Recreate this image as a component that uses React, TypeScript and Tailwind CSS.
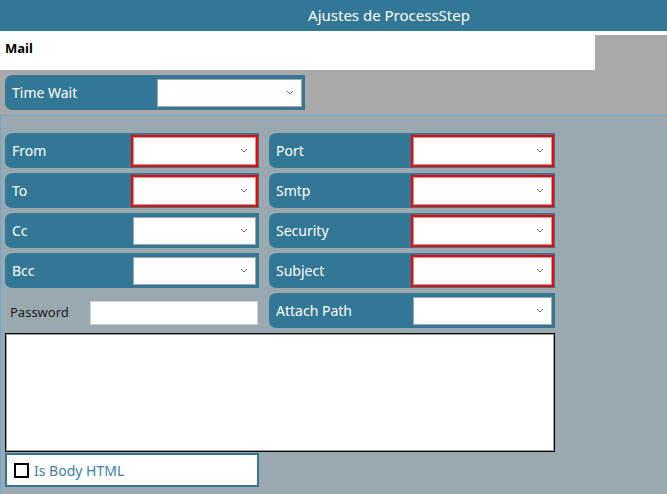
const font = { fontFamily: '"Segoe UI", "Noto Sans", "Liberation Sans", sans-serif' }

function Chevron() {
  return (
    <svg width="8" height="5" viewBox="0 0 8 5" className="shrink-0">
      <path d="M1 1 L4 4 L7 1" fill="none" stroke="#6b6b6b" strokeWidth="1" />
    </svg>
  )
}

function Dropdown({ width, required }: { width: string; required?: boolean }) {
  return (
    <div
      className={`${width} h-[28px] bg-white border border-[#a6a6a6] flex items-center justify-end pr-[7px] ${
        required ? "outline-2 outline-[#ff0000]" : ""
      }`}
    >
      <Chevron />
    </div>
  )
}

function Field({ label, required, right }: { label: string; required?: boolean; right?: boolean }) {
  return (
    <div className="h-[35px] bg-[#327896] rounded-l-[7px] flex items-center justify-between pl-[7px] pr-[3px]">
      <span className="text-white text-[14px]">{label}</span>
      <Dropdown width={right ? "w-[139px]" : "w-[123px]"} required={required} />
    </div>
  )
}

export default function App() {
  return (
    <div className="w-[667px] h-[494px] bg-[#9aa9b0] overflow-hidden flex flex-col" style={font}>
      <div className="h-[31px] bg-[#327896] flex items-center justify-center pl-[111px] text-white text-[15px]">
        Ajustes de ProcessStep
      </div>
      <div className="h-[39px] bg-white flex">
        <div className="flex-1 pl-[5px] pt-[8px] text-[13px] font-bold text-black">Mail</div>
        <div className="w-[72px] mt-[4px] bg-[#a9a9a9]" />
      </div>
      <div className="h-[45px] bg-[#a9a9a9] pl-[5px] pt-[5px]">
        <div className="w-[300px] h-[35px] bg-[#327896] rounded-l-[7px] flex items-center justify-between pl-[7px] pr-[3px]">
          <span className="text-white text-[14px]">Time Wait</span>
          <Dropdown width="w-[145px]" />
        </div>
      </div>
      <div className="flex-1 border-t border-l border-[#6aa7d3] pt-[17px] pl-[4px]">
        <div className="w-[550px] flex flex-col gap-[5px]">
          <div className="grid grid-cols-[254px_286px] gap-x-[10px] gap-y-[5px]">
            <Field label="From" required />
            <Field label="Port" required right />
            <Field label="To" required />
            <Field label="Smtp" required right />
            <Field label="Cc" />
            <Field label="Security" required right />
            <Field label="Bcc" />
            <Field label="Subject" required right />
            <div className="h-[35px] flex items-center justify-between pl-[5px] pr-px pt-[5px]">
              <span className="text-[13px] text-[#1a1a1a]">Password</span>
              <div className="w-[168px] h-[24px] bg-white border border-[#d0d0d0]" />
            </div>
            <Field label="Attach Path" right />
          </div>
          <div className="h-[119px] bg-white border border-black">
            <div className="h-full border border-[#a0a0a0]" />
          </div>
        </div>
        <div className="w-[254px] h-[34px] mt-px bg-white border-2 border-[#327896] flex items-center gap-[5px] pl-[7px]">
          <div className="w-[15px] h-[15px] border-2 border-black bg-white" />
          <span className="text-[14px] text-[#3d80a8]">Is Body HTML</span>
        </div>
      </div>
    </div>
  )
}
